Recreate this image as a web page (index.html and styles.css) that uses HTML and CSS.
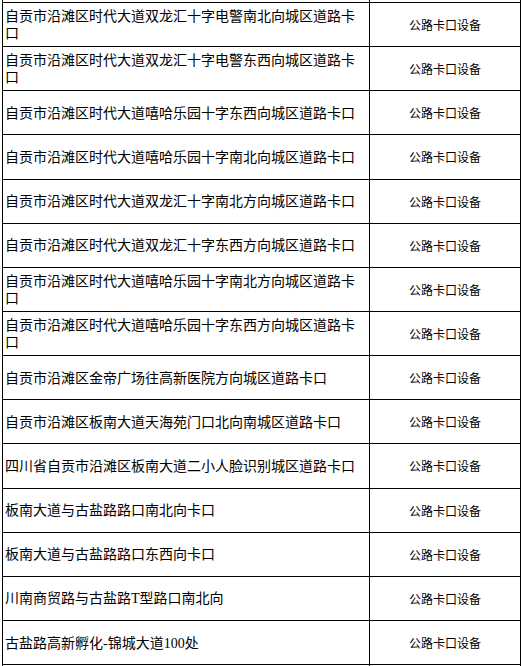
FILE: index.html
```html
<!DOCTYPE html>
<html lang="zh-CN">
<head>
<meta charset="utf-8">
<title>公路卡口设备</title>
<link rel="stylesheet" href="styles.css">
</head>
<body>
<div class="page">
<table class="grid">
<colgroup><col class="c-name"><col class="c-type"></colgroup>
<tbody>
<tr class="cut"><td></td><td></td></tr>
<tr><td class="name">自贡市沿滩区时代大道双龙汇十字电警南北向城区道路卡口</td><td class="type">公路卡口设备</td></tr>
<tr><td class="name">自贡市沿滩区时代大道双龙汇十字电警东西向城区道路卡口</td><td class="type">公路卡口设备</td></tr>
<tr><td class="name">自贡市沿滩区时代大道嘻哈乐园十字东西向城区道路卡口</td><td class="type">公路卡口设备</td></tr>
<tr><td class="name">自贡市沿滩区时代大道嘻哈乐园十字南北向城区道路卡口</td><td class="type">公路卡口设备</td></tr>
<tr><td class="name">自贡市沿滩区时代大道双龙汇十字南北方向城区道路卡口</td><td class="type">公路卡口设备</td></tr>
<tr><td class="name">自贡市沿滩区时代大道双龙汇十字东西方向城区道路卡口</td><td class="type">公路卡口设备</td></tr>
<tr><td class="name">自贡市沿滩区时代大道嘻哈乐园十字南北方向城区道路卡口</td><td class="type">公路卡口设备</td></tr>
<tr><td class="name">自贡市沿滩区时代大道嘻哈乐园十字东西方向城区道路卡口</td><td class="type">公路卡口设备</td></tr>
<tr><td class="name">自贡市沿滩区金帝广场往高新医院方向城区道路卡口</td><td class="type">公路卡口设备</td></tr>
<tr><td class="name">自贡市沿滩区板南大道天海苑门口北向南城区道路卡口</td><td class="type">公路卡口设备</td></tr>
<tr><td class="name">四川省自贡市沿滩区板南大道二小人脸识别城区道路卡口</td><td class="type">公路卡口设备</td></tr>
<tr><td class="name">板南大道与古盐路路口南北向卡口</td><td class="type">公路卡口设备</td></tr>
<tr><td class="name">板南大道与古盐路路口东西向卡口</td><td class="type">公路卡口设备</td></tr>
<tr><td class="name">川南商贸路与古盐路T型路口南北向</td><td class="type">公路卡口设备</td></tr>
<tr><td class="name">古盐路高新孵化-锦城大道100处</td><td class="type">公路卡口设备</td></tr>
<tr><td class="name">&nbsp;</td><td class="type">&nbsp;</td></tr>
</tbody>
</table>
</div>
</body>
</html>
```
FILE: styles.css
```css
html, body {
  margin: 0;
  padding: 0;
  background: #ffffff;
  overflow: hidden;
}
.page {
  padding-left: 2px;
  height: 666px;
  overflow: hidden;
}
.grid {
  border-collapse: collapse;
  table-layout: fixed;
  width: 518px;
  font-family: "Liberation Serif", "Noto Sans CJK SC", serif;
  color: #000;
}
.c-name { width: 367px; }
.c-type { width: 151px; }
.grid td {
  border: 1px solid #000;
  height: 44.15px;
  padding: 0 2px;
  vertical-align: middle;
  box-sizing: border-box;
}
.grid tr.cut td {
  border-top: 0;
  height: 2.5px;
  padding: 0;
}
.name {
  font-size: 14px;
  line-height: 17px;
  text-align: left;
  padding-top: 1px !important;
}
.type {
  font-size: 12px;
  line-height: 16px;
  text-align: center;
  padding-top: 3px !important;
}
```
